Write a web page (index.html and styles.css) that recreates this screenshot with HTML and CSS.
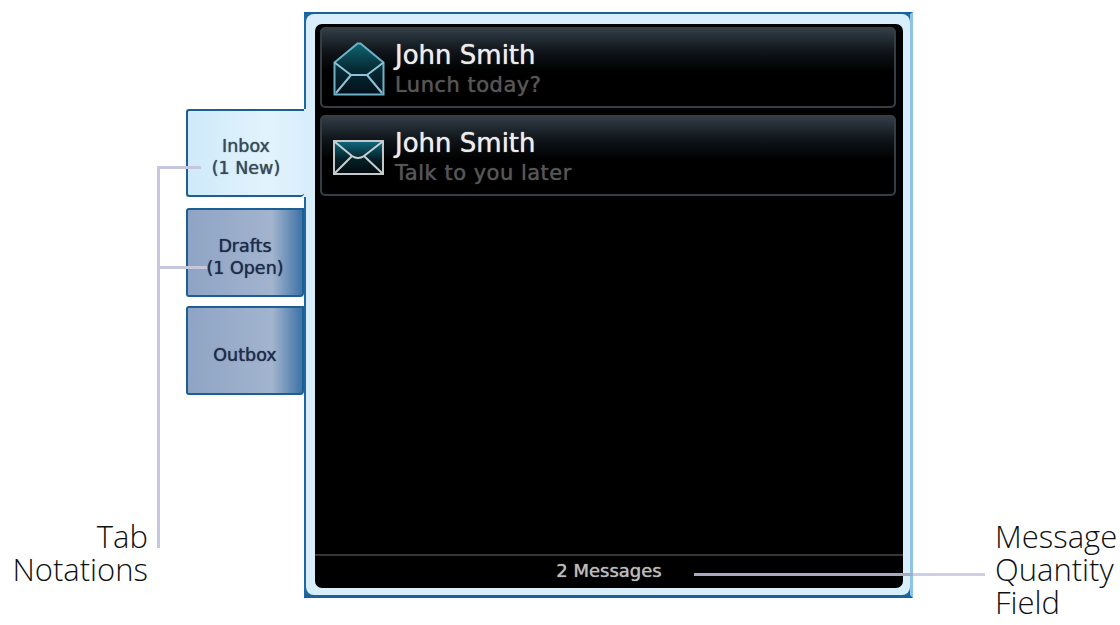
FILE: index.html
```html
<!DOCTYPE html>
<html lang="en">
<head>
    <meta charset="UTF-8">
    <title>Messages</title>
    <link rel="stylesheet" href="styles.css">
</head>
<body>
    <div class="device">
        <div class="tabs">
            <div class="tab tab-active">Inbox<br>(1 New)</div>
            <div class="tab tab-drafts">Drafts<br>(1 Open)</div>
            <div class="tab">Outbox</div>
        </div>
        <div class="panel">
            <div class="panel-face">
                <div class="screen">
                    <div class="msg-list">
                        <div class="msg">
                            <svg class="msg-icon" width="52" height="54" viewBox="0 0 52 54">
                                <defs>
                                    <linearGradient id="tealOpen" x1="0" y1="0" x2="0" y2="1">
                                        <stop offset="0" stop-color="#0f6670"/>
                                        <stop offset="0.5" stop-color="#062a35"/>
                                        <stop offset="1" stop-color="#03101a"/>
                                    </linearGradient>
                                </defs>
                                <path d="M1.500 20.500 L24.500 1.500 L27.500 1.500 L50.500 20.500 L50.500 52.500 L1.500 52.500 Z" fill="url(#tealOpen)" stroke="#6fb2c8" stroke-width="2"/>
                                <path d="M1.500 20.500 L18 33 L34 33 L50.500 20.500 M3 51 L18 33 M49 51 L34 33" fill="none" stroke="#8cc4d4" stroke-width="2"/>
                            </svg>
                            <div class="msg-text">
                                <div class="msg-name">John Smith</div>
                                <div class="msg-subject">Lunch today?</div>
                            </div>
                        </div>
                        <div class="msg">
                            <svg class="msg-icon msg-icon-shut" width="52" height="36" viewBox="0 0 52 36">
                                <defs>
                                    <linearGradient id="tealShut" x1="0" y1="0" x2="0" y2="1">
                                        <stop offset="0" stop-color="#0f6a80"/>
                                        <stop offset="0.55" stop-color="#052028"/>
                                        <stop offset="1" stop-color="#020a0e"/>
                                    </linearGradient>
                                </defs>
                                <rect x="1" y="1" width="49" height="33" fill="url(#tealShut)" stroke="#c4c8c8" stroke-width="2"/>
                                <path d="M2 2 L19 16 Q25 20 31 16 L49 2 M2 33 L19 16 M49 33 L31 16" fill="none" stroke="#c8d0d0" stroke-width="2"/>
                            </svg>
                            <div class="msg-text">
                                <div class="msg-name">John Smith</div>
                                <div class="msg-subject">Talk to you later</div>
                            </div>
                        </div>
                    </div>
                    <div class="screen-footer">2 Messages</div>
                </div>
            </div>
        </div>
    </div>

    <!-- callouts drawn over the screenshot -->
    <div class="leader leader-tab-v"></div>
    <div class="leader leader-inbox"></div>
    <div class="leader leader-drafts"></div>
    <div class="leader leader-qty"></div>
    <div class="callout callout-tab">Tab<br>Notations</div>
    <div class="callout callout-qty">Message<br>Quantity<br>Field</div>
</body>
</html>
```

FILE: styles.css
```css
html, body {
    margin: 0; padding: 0; background: #fff;
    width: 1120px; height: 625px; overflow: hidden;
    font-family: "DejaVu Sans", sans-serif;
}
.device { display: flex; padding: 12px 0 0 186px; }

.tabs { width: 118px; padding-top: 97px; flex-shrink: 0; }
.tab {
    box-sizing: border-box; height: 89px; padding-top: 8px;
    display: flex; align-items: center; justify-content: center; text-align: center;
    font-size: 17.500px; line-height: 22px; color: #1f2c4a;
    text-shadow: 0 0 1px currentColor;
    border: 2px solid #1d5f94; border-radius: 3px 0 4px 3px;
    background: linear-gradient(90deg, #8fa4c5 0%, #a2b4ce 74%, #3f73a6 100%);
}
.tab-active {
    position: relative; z-index: 1;
    height: 88px; margin-bottom: 11px;
    border-right: none; border-radius: 3px 0 4px 3px;
    color: #3a4a58;
    background: linear-gradient(90deg, #cfeafa 0%, #e2f3fc 70%, #d8effb 100%);
}
/* hides the panel edge where the open tab joins it */
.tab-active::after {
    content: ""; position: absolute;
    left: 100%; top: -2px; bottom: -2px; width: 3px;
    background: #d8effb;
}
.tab-drafts { margin-bottom: 9px; }

.panel {
    box-sizing: border-box; width: 609px; height: 586px;
    border-style: solid; border-width: 2px 3px 3px 2px;
    border-color: #17639a #8cc3e6 #1a6298 #1d6aa0;
    background: #1d6aa0;
}
.panel-face {
    box-sizing: border-box; height: 100%; padding: 10px 7px 7px 9px;
    background: #d8effb; border-radius: 8px;
}
.screen {
    height: 100%; display: flex; flex-direction: column;
    background: #000; border-radius: 7px;
}
.msg-list {
    flex: 1; display: flex; flex-direction: column; gap: 7px;
    padding: 3px 7px 0 5px;
}
.msg {
    box-sizing: border-box; height: 81px;
    display: flex; align-items: center;
    border: 2px solid #363d42; border-radius: 5px;
    background: linear-gradient(180deg, #323d47 0%, #10161b 28%, #000 55%, #000 100%);
}
.msg-icon { width: 52px; margin: 2px 0 0 11px; flex-shrink: 0; }
.msg-icon-shut { margin-top: 4px; }
.msg-text { margin-left: 10px; padding-top: 2px; }
.msg-name { font-size: 26px; line-height: 32px; color: #ececec; text-shadow: 0 0 1px #ececec; }
.msg-subject { font-size: 21px; line-height: 27px; padding-top: 1px; color: #565656; letter-spacing: 0.5px; text-shadow: 0 0 1px #565656; }

.screen-footer {
    height: 32px; line-height: 29px; text-align: center;
    border-top: 2px solid #33373a;
    font-size: 18px; color: #bcbcbc; text-shadow: 0 0 1px #bcbcbc;
}

/* annotation lines and labels */
.leader { position: absolute; z-index: 2; background: #c6c6dc; }
.leader-tab-v { left: 157px; top: 166px; width: 3px; height: 382px; }
.leader-inbox { left: 157px; top: 166px; width: 44px; height: 3px; }
.leader-drafts { left: 157px; top: 266px; width: 50px; height: 3px; }
.leader-qty {
    left: 694px; top: 573px; width: 291px; height: 3px;
    background: linear-gradient(90deg, #a9a9c4 219px, #cfcfe3 219px);
}
.callout {
    position: absolute; z-index: 2; color: #111;
    font-family: "Open Sans", sans-serif; font-weight: 300;
    font-size: 31px; line-height: 33px;
}
.callout-tab { left: 0; top: 520px; width: 148px; text-align: right; }
.callout-qty { left: 995px; top: 520px; }
```
